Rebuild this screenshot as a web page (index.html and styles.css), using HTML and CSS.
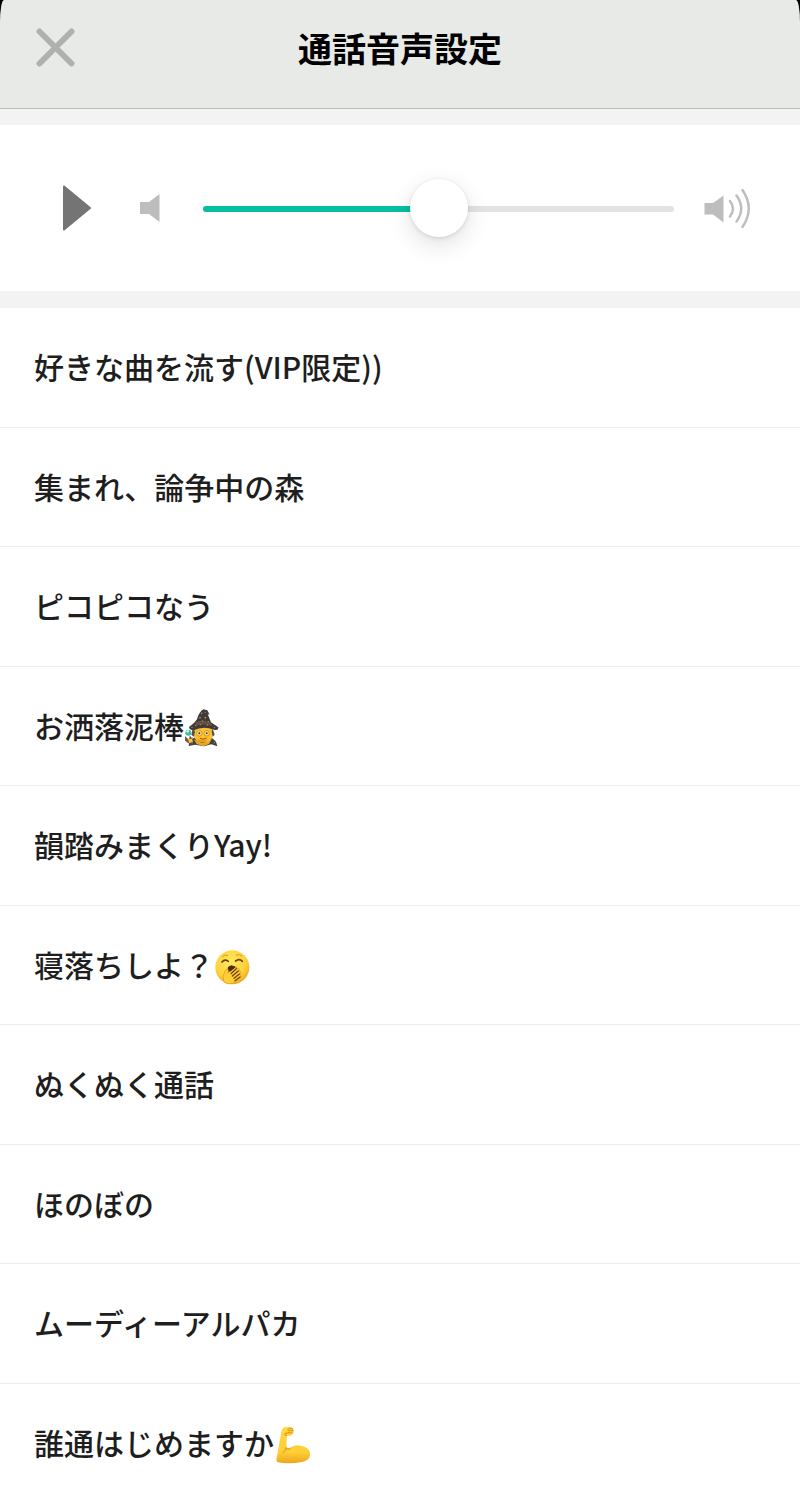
FILE: index.html
```html
<!DOCTYPE html>
<html lang="ja">
<head>
<meta charset="utf-8">
<meta name="viewport" content="width=device-width, initial-scale=1">
<title>通話音声設定</title>
<link rel="stylesheet" href="styles.css">
</head>
<body>
<div class="backdrop">
  <header class="header">
    <button class="icon-button close" type="button" aria-label="閉じる">
      <svg width="40" height="40" viewBox="0 0 40 40" fill="none" stroke="#b0b0b0" stroke-width="6" stroke-linecap="round"><path d="M3.500 3.500 35.500 35.500M35.500 3.500 3.500 35.500"/></svg>
    </button>
    <h1 class="title">通話音声設定</h1>
  </header>
</div>
<main>
  <section class="player">
    <button class="icon-button play" type="button" aria-label="再生">
      <svg width="30" height="46" viewBox="0 0 30 46"><path d="M2 1.500 28 23 2 44.500Z" fill="#747474" stroke="#747474" stroke-width="2" stroke-linejoin="round"/></svg>
    </button>
    <svg class="quiet" width="20" height="28" viewBox="0 0 20 28" fill="#bdbdbd" aria-hidden="true"><path d="M0 8H9L19.500 0V28L9 20H0Z"/></svg>
    <input class="slider" type="range" min="0" max="100" value="50" aria-label="音量">
    <svg class="loud" width="48" height="40" viewBox="0 0 48 40" aria-hidden="true"><path d="M.5 15H9L19.500 7.500V34.500L9 26.500H.5Z" fill="#bdbdbd"/><g fill="none" stroke="#bdbdbd" stroke-width="2.400" stroke-linecap="round"><path d="M26 13Q32 20.500 26 28.500M32.500 7.500Q42 20.500 32.500 33.500M38.500 2Q51 20.500 38.500 39"/></g></svg>
  </section>
  <ul class="list">
    <li><button class="row" type="button">好きな曲を流す(VIP限定))</button></li>
    <li><button class="row" type="button">集まれ、論争中の森</button></li>
    <li><button class="row" type="button">ピコピコなう</button></li>
    <li><button class="row" type="button">お洒落泥棒<svg class="emoji" viewBox="12 10 108 120" role="img" aria-label="魔法使い">
      <path d="M26 124Q28 103 47 98L88 97Q110 105 112 125L94 119 72 125 46 120Z" fill="#434147"/>
      <path d="M41 104 68 115 95 103 87 118 70 125 50 118Z" fill="#e8a51e"/>
      <path d="M41 70Q35 112 70 113 105 112 98 69L72 61Z" fill="#ffc02b"/>
      <path d="M38 72 34 90 42 96 45 80ZM98 72 104 90 98 96 95 80Z" fill="#594a46"/>
      <path d="M53 101Q67 113 84 101L80 110Q68 117 57 109Z" fill="#e7a01b"/>
      <path d="M27 67Q44 56 51 44 56 23 70 14L82 17 89 30 83 28 93 53 115 68Q116 78 102 75 70 62 41 77 27 76 27 67Z" fill="#3c3a3e"/>
      <path d="M49 51Q69 44 93 54L98 64Q68 55 43 64Z" fill="#625144"/>
      <g fill="#d28b27"><circle cx="65" cy="26" r="2.500"/><circle cx="76" cy="23" r="2"/><circle cx="60" cy="39" r="2.500"/><circle cx="76" cy="39" r="2.500"/><circle cx="68" cy="49" r="2"/><circle cx="85" cy="51" r="2"/><circle cx="47" cy="63" r="2"/><circle cx="61" cy="60" r="2"/><circle cx="82" cy="61" r="2"/><circle cx="36" cy="68" r="2"/><circle cx="103" cy="69" r="2"/><circle cx="36" cy="115" r="2"/><circle cx="103" cy="114" r="2"/></g>
      <g fill="#ffe58b" stroke="#b37821" stroke-width="2"><circle cx="58" cy="86" r="8"/><circle cx="80" cy="86" r="8"/></g>
      <circle cx="58" cy="86" r="3" fill="#54331f"/><circle cx="80" cy="86" r="3" fill="#54331f"/>
      <path d="M60 101Q69 107 79 100" fill="none" stroke="#9b4b19" stroke-width="3"/>
      <path d="M30 95 36 120" stroke="#684b3d" stroke-width="5"/><circle cx="25" cy="84" r="9" fill="#42b9a4"/><circle cx="23" cy="80" r="4" fill="#c4fff0"/><path d="M15 94 24 103 38 98 36 112 25 116 15 108Z" fill="#77594a"/><path d="m24 104 12-2 3 10-11 3Z" fill="#ffc436"/>
    </svg></button></li>
    <li><button class="row" type="button">韻踏みまくりYay!</button></li>
    <li><button class="row" type="button">寝落ちしよ？<svg class="emoji" viewBox="14 14 108 120" role="img" aria-label="あくび">
      <defs><radialGradient id="face" cx="45%" cy="35%" r="65%"><stop stop-color="#ffe95d"/><stop offset=".7" stop-color="#ffd23c"/><stop offset="1" stop-color="#f1a51c"/></radialGradient></defs>
      <circle cx="69" cy="75" r="51" fill="url(#face)"/>
      <g fill="none" stroke="#68430f" stroke-width="5" stroke-linecap="round"><path d="M38 59Q46 49 57 57M79 56Q90 47 99 57"/><path d="M39 43Q46 35 55 39M81 38Q91 34 98 41" stroke="#d99a22" stroke-width="3"/></g>
      <path d="M54 83Q56 70 68 70 82 70 86 85L75 102H60Z" fill="#4d2b16"/>
      <path d="M44 119Q37 101 47 86 51 78 56 81 59 84 55 92L77 73Q84 72 82 78L88 78Q93 80 89 86L94 88Q97 92 92 96L94 102Q94 106 86 110L71 123Q55 128 44 119Z" fill="#ffcf37" stroke="#dc9620" stroke-width="2"/>
      <path d="M65 94 81 79M69 101 87 86M74 108 90 95M77 115 92 104" stroke="#704211" stroke-width="4" stroke-linecap="round"/>
      <path d="M55 75 66 69 79 75 62 88Z" fill="#4d2b16"/>
    </svg></button></li>
    <li><button class="row" type="button">ぬくぬく通話</button></li>
    <li><button class="row" type="button">ほのぼの</button></li>
    <li><button class="row" type="button">ムーディーアルパカ</button></li>
    <li><button class="row" type="button">誰通はじめますか<svg class="emoji" viewBox="14 14 108 120" role="img" aria-label="力こぶ">
      <defs><linearGradient id="arm" x1="0" y1="0" x2="0" y2="1"><stop stop-color="#ffd746"/><stop offset=".7" stop-color="#ffcf35"/><stop offset="1" stop-color="#eca51e"/></linearGradient></defs>
      <path d="M21 119Q29 75 36 35 38 20 52 20L66 19Q76 26 72 39L63 47 53 46Q51 68 52 82L61 84Q74 72 94 76 118 80 123 98 124 118 101 124 61 133 23 125Z" fill="url(#arm)"/>
      <path d="M52 46 46 42Q48 36 57 38M55 28 61 24 70 26M58 31 71 31M58 37 69 38M51 82Q50 91 41 97M53 86Q61 89 64 84" fill="none" stroke="#d78e1a" stroke-width="3" stroke-linecap="round"/>
    </svg></button></li>
  </ul>
</main>
</body>
</html>
```
FILE: styles.css
```css
* {
  box-sizing: border-box;
}

body {
  margin: 0;
  background: #fff;
  color: #1e1e1e;
  font-family: "Noto Sans CJK JP", "Noto Sans", sans-serif;
}

button {
  border: 0;
  padding: 0;
  background: none;
  color: inherit;
  font: inherit;
}

svg {
  display: block;
}

.backdrop {
  background: #000;
}

.header {
  display: grid;
  grid-template-columns: 40px 1fr 40px;
  align-items: center;
  padding: 24px 36px 36px;
  border-bottom: 1px solid #bdbdbd;
  border-radius: 4px 4px 0 0 / 22px 22px 0 0;
  background: #e8eae8;
}

.title {
  margin: 0;
  color: #000;
  font-size: 34px;
  font-weight: 700;
  line-height: 48px;
  text-align: center;
}

.player {
  display: flex;
  align-items: center;
  height: 199px;
  padding: 0 48px 0 62px;
  border-top: 16px solid #f3f3f3;
  border-bottom: 17px solid #f3f3f3;
}

.play {
  margin-right: 48px;
}

.quiet {
  margin-right: 43px;
}

.slider {
  flex: 1;
  min-width: 0;
  height: 60px;
  margin: 0 30px 0 0;
  padding-top: 2px;
  appearance: none;
  background: none;
}

.slider::-webkit-slider-runnable-track {
  height: 6px;
  border-radius: 3px;
  background: linear-gradient(to right, #06bf9f 50%, #e3e3e3 50%);
}

.slider::-webkit-slider-thumb {
  appearance: none;
  width: 58px;
  height: 58px;
  margin-top: -27px;
  border-radius: 50%;
  background: #fff;
  box-shadow: 0 8px 24px rgb(0 0 0 / 12%), 0 1px 4px rgb(0 0 0 / 12%);
}

.list {
  margin: 0;
  padding: 0;
  list-style: none;
}

.row {
  display: flex;
  align-items: center;
  width: 100%;
  padding: 34px 34px 37px;
  border-bottom: 1px solid #ededed;
  font-size: 30px;
  font-weight: 500;
  line-height: 48px;
  text-align: left;
}

li:nth-child(even) .row {
  padding-bottom: 36px;
}

li:last-child .row {
  padding-bottom: 20px;
  border-bottom: 0;
}

.emoji {
  width: 36px;
  height: 40px;
  margin-top: 6px;
}
```
